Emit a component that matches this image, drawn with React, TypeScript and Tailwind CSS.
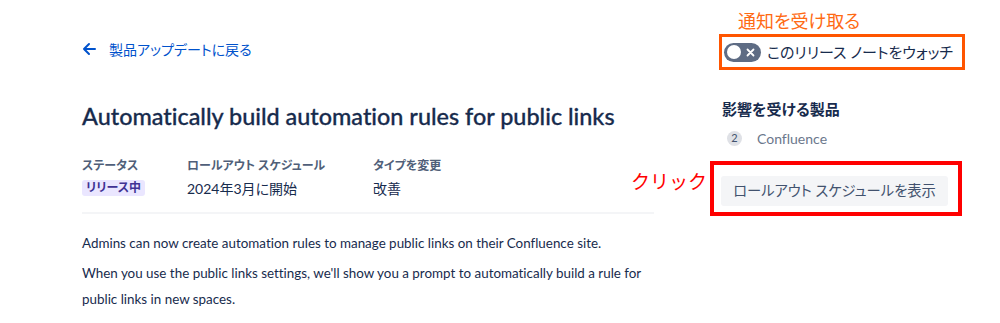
const font = "font-['Lato','Noto_Sans_CJK_JP',sans-serif] [font-feature-settings:'palt'] [font-variant-ligatures:none]";

function BackLink() {
    return (
        <a href="#" className="flex h-[22px] items-center gap-[13px] text-[14px] text-[#0052cc]">
            <svg width="14" height="14" viewBox="0 0 14 14" fill="none" aria-hidden="true">
                <path d="M13 7H2M7 2L2 7l5 5" stroke="#0052cc" strokeWidth="2" strokeLinecap="round" strokeLinejoin="round" />
            </svg>
            <span>製品アップデートに戻る</span>
        </a>
    );
}

function Meta({ label, width, children }: { label: string; width: string; children: React.ReactNode }) {
    return (
        <div className={`flex flex-col gap-[4px] ${width}`}>
            <div className="text-[12px] font-bold leading-[16px] text-[#505f79]">{label}</div>
            <div className="flex h-[20px] items-center text-[14px] text-[#172b4d]">{children}</div>
        </div>
    );
}

function Toggle() {
    return (
        <div className="flex h-[19px] w-[37px] shrink-0 items-center justify-between rounded-full bg-[#5e6c84] px-[3px]">
            <div className="h-[14px] w-[14px] rounded-full bg-white" />
            <svg width="9" height="9" viewBox="0 0 9 9" className="mr-[3px]" aria-hidden="true">
                <path d="M1.5 1.5l6 6M7.5 1.5l-6 6" stroke="white" strokeWidth="1.8" strokeLinecap="round" />
            </svg>
        </div>
    );
}

export default function App() {
    return (
        <div className={`${font} flex h-[323px] w-[1000px] overflow-hidden bg-white pl-[82px]`}>
            <main className="w-[572px] shrink-0 pt-[38px]">
                <BackLink />
                <h1 className="mt-[38px] whitespace-nowrap text-[23.4px] font-medium leading-[36px] text-[#172b4d] [-webkit-text-stroke:0.3px_#172b4d]">
                    Automatically build automation rules for public links
                </h1>
                <div className="mt-[24px] flex pb-[14px]">
                    <Meta label="ステータス" width="w-[105px]">
                        <span className="rounded-[3px] bg-[#eae6ff] px-[4px] text-[12px] font-bold leading-[16px] text-[#403294]">
                            リリース中
                        </span>
                    </Meta>
                    <Meta label="ロールアウト スケジュール" width="w-[186px]">2024年3月に開始</Meta>
                    <Meta label="タイプを変更" width="w-[120px]">改善</Meta>
                </div>
                <div className="border-t-2 border-[#f4f5f7]" />
                <div className="mt-[16px] text-[13.4px] leading-[26px] text-[#172b4d]">
                    <p>Admins can now create automation rules to manage public links on their Confluence site.</p>
                    <p className="mt-[4px]">
                        When you use the public links settings, we'll show you a prompt to automatically build a rule for public links in new spaces.
                    </p>
                </div>
            </main>

            <aside className="ml-[65px] w-[246px] shrink-0 pt-[9px]">
                <div className="ml-[19px] text-[18px] leading-[24px] text-[#ff6a13]">通知を受け取る</div>
                <div className="mt-[1px] flex h-[36px] items-center gap-[6px] border-[3px] border-[#ff5500] pl-[2px]">
                    <Toggle />
                    <span className="whitespace-nowrap text-[15px] text-[#172b4d]">このリリース ノートをウォッチ</span>
                </div>
                <h2 className="ml-[3px] mt-[28px] text-[15px] font-bold leading-[22px] text-[#172b4d]">影響を受ける製品</h2>
                <div className="ml-[8px] mt-[8px] flex items-center gap-[15px] text-[14px] text-[#6b778c]">
                    <span className="flex h-[15px] w-[15px] items-center justify-center rounded-full bg-[#dfe1e6] text-[11px] text-[#42526e]">
                        2
                    </span>
                    <span>Confluence</span>
                </div>
                <div className="relative -ml-[9px] mt-[12px] w-[252px] border-4 border-[#ff0000] pb-[6px] pl-[7px] pr-[10px] pt-[11px]">
                    <span className="absolute right-full top-[5px] mr-[7px] whitespace-nowrap text-[19px] leading-[24px] text-[#ff0000] [font-feature-settings:normal]">
                        クリック
                    </span>
                    <button className="flex h-[30px] w-full items-center justify-center rounded-[3px] bg-[#f4f5f7] text-[14.3px] text-[#42526e]">
                        ロールアウト スケジュールを表示
                    </button>
                </div>
            </aside>
        </div>
    );
}
